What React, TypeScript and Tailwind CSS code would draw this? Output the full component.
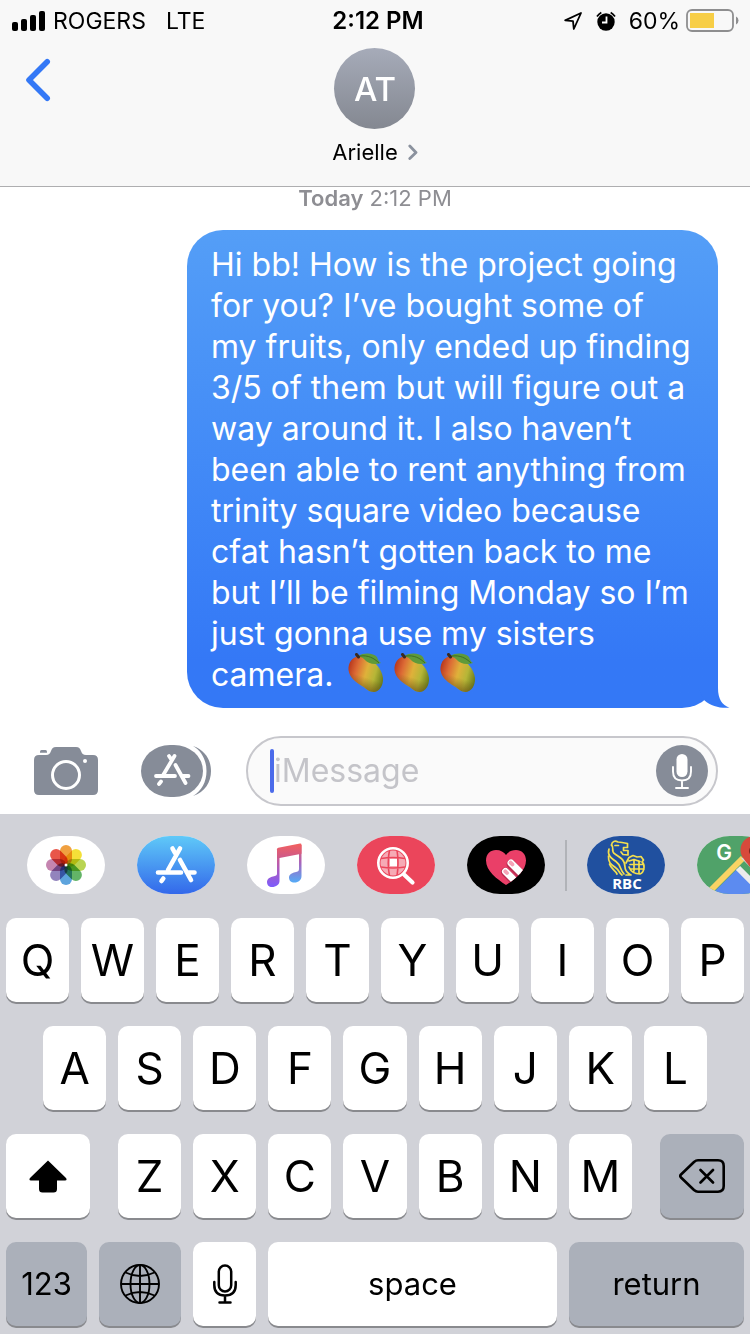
import React from "react";

function StatusBar() {
  return (
    <div className="grid h-10 grid-cols-[1fr_auto_1fr] items-center pt-[2px] pr-[10px] pl-3 text-[23px] leading-7 text-black">
      <div className="flex items-center">
        <svg width="33" height="20" viewBox="0 0 33 20" aria-hidden="true">
          <rect x="0" y="11" width="6" height="9" rx="2" />
          <rect x="9" y="8" width="6" height="12" rx="2" />
          <rect x="18" y="4" width="6" height="16" rx="2" />
          <rect x="27" y="0" width="6" height="20" rx="2" />
        </svg>
        <span className="ml-2">ROGERS</span>
        <span className="ml-5">LTE</span>
      </div>
      <span className="pl-1 text-[24px] font-semibold">2:12 PM</span>
      <div className="flex items-center justify-end">
        <svg width="18" height="18" viewBox="0 0 18 18" fill="none" stroke="#000" strokeWidth="1.8" strokeLinejoin="round" aria-hidden="true">
          <path d="M17 1 1.2 8.4 9 9.2 9.8 17Z" />
        </svg>
        <svg className="ml-[14px]" width="20" height="20" viewBox="0 0 20 20" aria-hidden="true">
          <circle cx="10" cy="11" r="8.7" />
          <path d="M1 5.5A12 12 0 0 1 5.3 1.4M19 5.5A12 12 0 0 0 14.7 1.4" fill="none" stroke="#000" strokeWidth="1.7" />
          <path d="M10.5 5.5V11.5H6" fill="none" stroke="#fff" strokeWidth="1.8" />
        </svg>
        <span className="ml-[13px]">60%</span>
        <svg className="ml-[6px]" width="54" height="24" viewBox="0 0 54 24" role="img" aria-label="Battery at 60 percent">
          <rect x="1" y="1" width="46" height="21" rx="5" fill="none" stroke="#8e8e8f" strokeWidth="1.8" />
          <rect x="4" y="4" width="24" height="15" fill="#f7ce46" />
          <path d="M50 7.5Q52.5 8.5 52.5 11.5T50 15.5Z" fill="#8e8e8f" />
        </svg>
      </div>
    </div>
  );
}

function Header() {
  return (
    <header className="border-b border-[#aeaeb0] bg-[#f8f8f8]">
      <StatusBar />
      <div className="grid h-[146px] grid-cols-[1fr_auto_1fr] items-start pt-2">
        <button type="button" aria-label="Back" className="ml-6 w-8 pt-2">
          <svg width="28" height="46" viewBox="0 0 28 46" fill="none" stroke="#3478f6" strokeWidth="5.6" strokeLinecap="round" strokeLinejoin="round">
            <path d="M23.2 5.8 5 24 23.2 42.2" />
          </svg>
        </button>
        <button type="button" className="flex flex-col items-center">
          <span className="flex size-[81px] items-center justify-center rounded-full bg-linear-to-b from-[#a6abb9] to-[#848891] text-[33px] leading-10 font-medium text-white">
            AT
          </span>
          <span className="mt-[7px] flex items-center gap-[10px] text-[22px] leading-8 text-black">
            Arielle
            <svg width="10" height="16" viewBox="0 0 10 16" fill="none" stroke="#8b929e" strokeWidth="2.8" strokeLinecap="round" strokeLinejoin="round" aria-hidden="true">
              <path d="M1.8 2 8 8.5 1.8 14.5" />
            </svg>
          </span>
        </button>
      </div>
    </header>
  );
}

function Mango() {
  return (
    <svg width="36" height="40" viewBox="0 0 36 40" aria-hidden="true">
      <defs>
        <linearGradient id="mango-skin" x1="0" y1="0.35" x2="1" y2="0.65">
          <stop offset="0" stopColor="#b93a1f" />
          <stop offset="0.22" stopColor="#dc6a35" />
          <stop offset="0.5" stopColor="#dfb13a" />
          <stop offset="0.75" stopColor="#b6b637" />
          <stop offset="1" stopColor="#6d7d1c" />
        </linearGradient>
        <linearGradient id="mango-shade" x1="0.7" y1="0" x2="0.4" y2="1">
          <stop offset="0.6" stopColor="#6b4a10" stopOpacity="0" />
          <stop offset="1" stopColor="#6b4a10" stopOpacity="0.75" />
        </linearGradient>
      </defs>
      <path d="M11 3C4 4 0 10 0.500 17C1.500 25 8 29 14 33C19 36 21 39 26 39C32 38 35.500 32 35 25C34 16 27 9 21 5C18 3 14 2 11 3Z" fill="url(#mango-skin)" />
      <path d="M11 3C4 4 0 10 0.500 17C1.500 25 8 29 14 33C19 36 21 39 26 39C32 38 35.500 32 35 25C34 16 27 9 21 5C18 3 14 2 11 3Z" fill="url(#mango-shade)" />
      <path d="M10 3C16 -1 26 0 29 4C30 7 31 9 33 10C27 12 20 11 16 6C14 4 12 4 10 3Z" fill="#5f9a3a" />
      <path d="M12 3C20 2 26 5 31 10" fill="none" stroke="#3d6f25" strokeWidth="1" />
      <path d="M8.500 1.500 10.500 4" stroke="#3a2a20" strokeWidth="3" strokeLinecap="round" />
    </svg>
  );
}

function Conversation() {
  return (
    <main className="bg-white pb-7">
      <p className="text-center text-[22px] leading-[22px] text-[#8e8e93]">
        <span className="font-semibold">Today</span> 2:12 PM
      </p>
      <div className="relative mt-[21px] mr-8 ml-[187px] rounded-[36px] bg-linear-to-b from-[#549ef7] to-[#3478f6] to-90% pt-[14px] pr-[22px] pb-[13px] pl-6 text-[32px] leading-[41px] text-white">
        <p>
          Hi bb! How is the project going for you? I’ve bought some of my fruits, only ended up finding 3/5 of them but will figure out a way around it. I also haven’t been able to rent anything from trinity square video because cfat hasn’t gotten back to me but I’ll be filming Monday so I’m just gonna use my sisters camera.{" "}
          <span role="img" aria-label="Three mangoes" className="-my-2 ml-[6px] inline-flex gap-[10px] align-[-7px]">
            <Mango />
            <Mango />
            <Mango />
          </span>
        </p>
        <svg className="absolute -right-3 bottom-0" width="40" height="40" viewBox="0 0 40 40" fill="#3478f6" aria-hidden="true">
          <path d="M28 0V20C28 31 32 37 39.500 39.700C30 40.500 21 38 14.500 32.500L8 20Z" />
        </svg>
      </div>
    </main>
  );
}

function Composer() {
  return (
    <div className="flex items-center bg-white pr-8 pb-2 pl-[34px]">
      <button type="button" aria-label="Camera" className="shrink-0">
        <svg width="64" height="48" viewBox="0 0 64 48" fill="#868c98">
          <path d="M5 8H12C15 8 16 6.500 17 4C18 1.500 19 0 22 0H42C45 0 46 1.500 47 4C48 6.500 49 8 52 8H59Q64 8 64 13V43Q64 48 59 48H5Q0 48 0 43V13Q0 8 5 8Z" />
          <path d="M6 5.700V4.500Q6 3 7.500 3H11.500Q13 3 13 4.500V5.700Z" />
          <circle cx="32" cy="28" r="13.500" fill="none" stroke="#fff" strokeWidth="3" />
          <circle cx="51" cy="14" r="2" fill="#fff" />
        </svg>
      </button>
      <button type="button" aria-label="Apps" className="ml-[43px] shrink-0">
        <svg width="70" height="52" viewBox="0 0 70 52">
          <rect width="62" height="52" rx="29" ry="26" fill="#868c98" />
          <path d="M52 1C64 5 70 15 70 26S64 47 52 51C60.500 46 65.500 37 65.500 26S60.500 6 52 1Z" fill="#868c98" />
          <g fill="none" stroke="#fff" strokeWidth="3.800" strokeLinecap="round">
            <path d="M33.500 11 22.500 29.500M28 11 30 14M34.500 20 44.500 38M15 31H34M41 31H47.500M20 36.500 18 39" />
          </g>
        </svg>
      </button>
      <div className="relative ml-[35px] flex h-[70px] min-w-0 flex-1 items-center rounded-full border-2 border-[#c7c7cc] bg-[#fafafa] pr-2 pl-[26px]">
        <span className="absolute left-[22px] h-11 w-1 rounded-full bg-[#4b6bea]" />
        <input
          type="text"
          aria-label="Message"
          placeholder="iMessage"
          className="h-12 w-full min-w-0 flex-1 bg-transparent text-[32px] text-black outline-none placeholder:text-[#c4c4c9]"
        />
        <button type="button" aria-label="Record audio" className="shrink-0 rounded-full bg-[#868c98]">
          <svg width="52" height="52" viewBox="0 0 52 52" fill="none" stroke="#fff" strokeWidth="1.900" strokeLinecap="round">
            <rect x="20.500" y="9" width="11" height="23" rx="5.500" fill="#fff" stroke="none" />
            <path d="M17 22V26.500Q17 35.500 26 35.500T35 26.500V22M26 35.500V43M20 43H32" />
          </svg>
        </button>
      </div>
    </div>
  );
}

const PETALS = ["#f0a040", "#f4e038", "#b9d452", "#63b467", "#5ea4dd", "#9384bd", "#c585b0", "#e8564a"];

function PhotosIcon() {
  return (
    <g className="isolate">
      {PETALS.map((fill, i) => (
        <rect key={fill} x="33" y="9" width="12" height="20" rx="6" fill={fill} className="mix-blend-multiply" transform={`rotate(${i * 45} 39 29)`} />
      ))}
      <circle cx="39" cy="29" r="1.500" fill="#fff" />
    </g>
  );
}

function StoreIcon() {
  return (
    <>
      <defs>
        <linearGradient id="store-bg" x1="0" y1="0" x2="0" y2="1">
          <stop offset="0" stopColor="#5fc9f8" />
          <stop offset="1" stopColor="#3368ea" />
        </linearGradient>
      </defs>
      <rect width="78" height="58" fill="url(#store-bg)" />
      <path d="M43 12.500 31 34M35.500 12.500 38 17M43 24 54 44M21 36.500H44M51 36.500H57.500M26.300 42.500 24.500 45" fill="none" stroke="#fff" strokeWidth="4.600" strokeLinecap="round" />
    </>
  );
}

function MusicIcon() {
  return (
    <>
      <defs>
        <linearGradient id="music-left" x1="0" y1="8" x2="0" y2="50" gradientUnits="userSpaceOnUse">
          <stop offset="0" stopColor="#f4605f" />
          <stop offset="0.5" stopColor="#b75bb0" />
          <stop offset="1" stopColor="#7f5cf9" />
        </linearGradient>
        <linearGradient id="music-right" x1="0" y1="8" x2="0" y2="46" gradientUnits="userSpaceOnUse">
          <stop offset="0" stopColor="#ea5c65" />
          <stop offset="0.5" stopColor="#a765bd" />
          <stop offset="1" stopColor="#56aaf6" />
        </linearGradient>
        <linearGradient id="music-beam" x1="0" y1="8" x2="0" y2="22" gradientUnits="userSpaceOnUse">
          <stop offset="0" stopColor="#f2605f" />
          <stop offset="1" stopColor="#cc598b" />
        </linearGradient>
      </defs>
      <path d="M30 13H32.500V45C32.500 48.500 29 51 25 51C22 51 20 49 20 46C20 43 23 41 26 40.500C29 40 30 39.500 30 37.500Z" fill="url(#music-left)" />
      <path d="M52 9H54.500V40C54.500 44 51.500 46.500 47.500 46.500C44 46.500 42 44.500 42 41.500C42 38.500 45 37 48 36.300C51 35.700 52 35 52 33Z" fill="url(#music-right)" />
      <path d="M30 13.300Q30 12 31.300 11.700L53 7.600Q54.500 7.400 54.500 9V17.800L30 22.500Z" fill="url(#music-beam)" />
    </>
  );
}

function ImageSearchIcon() {
  return (
    <>
      <rect width="78" height="58" fill="#eb455b" />
      <circle cx="36" cy="27" r="12.500" fill="#f6aab5" />
      <path d="M33 23H40V30H33Z" fill="#fff" />
      <path d="M24 22.500Q36 20.500 48 22.500M24 31Q36 33 48 31M32.500 14Q30 27 32.500 40M40 14Q42 27 40 40" fill="none" stroke="#eb455b" strokeWidth="1.600" />
      <circle cx="36" cy="27" r="14.700" fill="none" stroke="#fff" strokeWidth="2.600" />
      <path d="M47 38.500 55.500 46.500" stroke="#fff" strokeWidth="4.200" strokeLinecap="round" />
    </>
  );
}

function HeartIcon() {
  const heart = "M39 49C30 43 19 35 19 24.500C19 18 23.500 14 29 14C33.500 14 37 16 39 19C41 16 44.500 14 49 14C54.500 14 59 18 59 24.500C59 35 48 43 39 49Z";
  return (
    <>
      <defs>
        <clipPath id="heart-clip">
          <path d={heart} />
        </clipPath>
      </defs>
      <rect width="78" height="58" fill="#000" />
      <path d={heart} fill="#ea3f68" />
      <g clipPath="url(#heart-clip)">
        <path d="M44 28 62 46M38.500 36 54 51.500" stroke="#b92c50" strokeWidth="9" strokeLinecap="round" />
        <path d="M44 27 62 45M38.500 35.500 54 51" stroke="#fff" strokeWidth="7" strokeLinecap="round" />
        <path d="M43.600 26.600 45.400 28.400M38.300 35.300 40 37" stroke="#f5a3b7" strokeWidth="3.800" strokeLinecap="round" />
      </g>
    </>
  );
}

function BankIcon() {
  return (
    <>
      <rect width="78" height="58" fill="#20509f" />
      <g fill="none" stroke="#f4df4e" strokeWidth="1.700" strokeLinejoin="round" strokeLinecap="round">
        <path d="M24.500 9C25 5 28 4.500 31 6L35 6.500 40.500 7.500V11.500H36.500V14.500H41V19L36 18.500 34 16M28 9.500H31.500" />
        <path d="M24.500 9C28 12 23 15 28 18C34 22 38 24 38 31C38 36 41 37 44 39H39" />
        <path d="M22 13C20 19 24 22 29 25.500C34 29 33 34 37 38" />
        <path d="M21.500 20C21 27 25 29 29 32C32 34 32 37 35 39" />
        <path d="M22.500 28C24 33 28 34 30 38" />
        <path d="M39 27 42 21.500 46 19.500 50 21 54 20.500 56.500 24 55 26M42 25 47 23.500 53 25.500M42 31C44 36 48 38 53 38C58 36 58 28 55 26M47 25V35M52 25V37M43 28.500H56M44 33H57" />
      </g>
      <text x="40" y="52.500" textAnchor="middle" fill="#fff" fontFamily="'Open Sans', sans-serif" fontSize="15" fontWeight="700">
        RBC
      </text>
    </>
  );
}

function MapsIcon() {
  return (
    <>
      <rect width="78" height="58" fill="#50a269" />
      <path d="M15 58 41 32 67 58Z" fill="#5c8bf0" />
      <path d="M8 60 46 22" stroke="#f9d364" strokeWidth="6" />
      <path d="M41 32 66 57" stroke="#ececec" strokeWidth="6" />
      <path d="M44 22 64 42V20Z" fill="#d8d8d8" />
      <path d="M58 0C50 0 43.500 6 43.500 14C43.500 24 54 27 58 42C62 27 72 24 72 14C72 6 66 0 58 0Z" fill="#d7493b" />
      <circle cx="58" cy="15" r="6" fill="#77241e" />
      <text x="27" y="24" textAnchor="middle" fill="#fff" fontFamily="Inter, sans-serif" fontSize="21" fontWeight="600">
        G
      </text>
    </>
  );
}

function AppPill({ label, children }: { label: string; children: React.ReactNode }) {
  return (
    <button type="button" aria-label={label} className="shrink-0 overflow-hidden rounded-[33px/29px] bg-white">
      <svg width="78" height="58" viewBox="0 0 78 58">
        {children}
      </svg>
    </button>
  );
}

function AppStrip() {
  return (
    <nav aria-label="iMessage apps" className="flex h-[104px] items-center overflow-hidden pb-[2px] pl-[27px]">
      <div className="flex shrink-0 gap-8">
        <AppPill label="Photos"><PhotosIcon /></AppPill>
        <AppPill label="App Store"><StoreIcon /></AppPill>
        <AppPill label="Music"><MusicIcon /></AppPill>
        <AppPill label="Image search"><ImageSearchIcon /></AppPill>
        <AppPill label="Digital Touch"><HeartIcon /></AppPill>
      </div>
      <span className="mx-5 h-[51px] w-[2px] shrink-0 bg-[#b1b3b8]" />
      <div className="flex shrink-0 gap-8">
        <AppPill label="RBC"><BankIcon /></AppPill>
        <AppPill label="Google Maps"><MapsIcon /></AppPill>
      </div>
    </nav>
  );
}

function Key({ children, label, dark = false, letter = false }: { children: React.ReactNode; label?: string; dark?: boolean; letter?: boolean }) {
  return (
    <button
      type="button"
      aria-label={label}
      className={`flex h-[84px] min-w-0 flex-1 items-center justify-center rounded-[10px] text-black shadow-[0_2px_0_#898a8e] ${dark ? "bg-[#abb0ba]" : "bg-white"} ${letter ? "text-[44px]" : "text-[31px]"}`}
    >
      {children}
    </button>
  );
}

function Letters({ row }: { row: string }) {
  return (
    <div className="flex min-w-0 flex-1 gap-3">
      {row.split("").map((c) => (
        <Key key={c} letter>{c}</Key>
      ))}
    </div>
  );
}

function Keyboard() {
  return (
    <div className="flex flex-col gap-6 pb-2">
      <div className="flex px-[6px]"><Letters row="QWERTYUIOP" /></div>
      <div className="flex px-[43px]"><Letters row="ASDFGHJKL" /></div>
      <div className="grid grid-cols-[84fr_514fr_84fr] gap-7 px-[6px]">
        <Key label="Shift">
          <svg width="38" height="33" viewBox="0 0 38 33">
            <path d="M19 0.500 37 18Q38.500 20.500 36 20.500H28V29Q28 32.500 24.500 32.500H13.500Q10 32.500 10 29V20.500H2Q-0.500 20.500 1 18Z" />
          </svg>
        </Key>
        <Letters row="ZXCVBNM" />
        <Key label="Delete" dark>
          <svg width="46" height="34" viewBox="0 0 46 34" fill="none" stroke="#000" strokeWidth="2.600" strokeLinejoin="round" strokeLinecap="round">
            <path d="M2 15.500 15 3Q17 1.300 19 1.300H39Q44.700 1.300 44.700 7V27Q44.700 32.700 39 32.700H19Q17 32.700 15 31L2 18.500Q0.500 17 2 15.500ZM21.500 11 34 23.500M34 11 21.500 23.500" />
          </svg>
        </Key>
      </div>
      <div className="grid grid-cols-[81fr_82fr_63fr_289fr_175fr] gap-3 px-[6px]">
        <Key dark>123</Key>
        <Key label="Next keyboard" dark>
          <svg width="40" height="40" viewBox="0 0 40 40" fill="none" stroke="#000" strokeWidth="1.900">
            <circle cx="20" cy="20" r="19" />
            <ellipse cx="20" cy="20" rx="9.500" ry="19" />
            <path d="M20 1V39M1 20H39M5.500 8.500Q20 15.500 34.500 8.500M5.500 31.500Q20 24.500 34.500 31.500" />
          </svg>
        </Key>
        <Key label="Dictate">
          <svg width="24" height="40" viewBox="0 0 24 40" fill="none" stroke="#000" strokeWidth="2.500" strokeLinecap="round">
            <rect x="5.800" y="1.500" width="12.400" height="26" rx="6.200" />
            <path d="M1.300 18V21Q1.300 31.500 12 31.500T22.700 21V18M12 31.500V38M6.500 38.500H17.500" />
          </svg>
        </Key>
        <Key>space</Key>
        <Key dark>return</Key>
      </div>
    </div>
  );
}

export default function App() {
  return (
    <div className="min-h-screen bg-[#d1d2d8] font-[Inter,'Liberation_Sans',sans-serif]">
      <Header />
      <Conversation />
      <Composer />
      <AppStrip />
      <Keyboard />
    </div>
  );
}
